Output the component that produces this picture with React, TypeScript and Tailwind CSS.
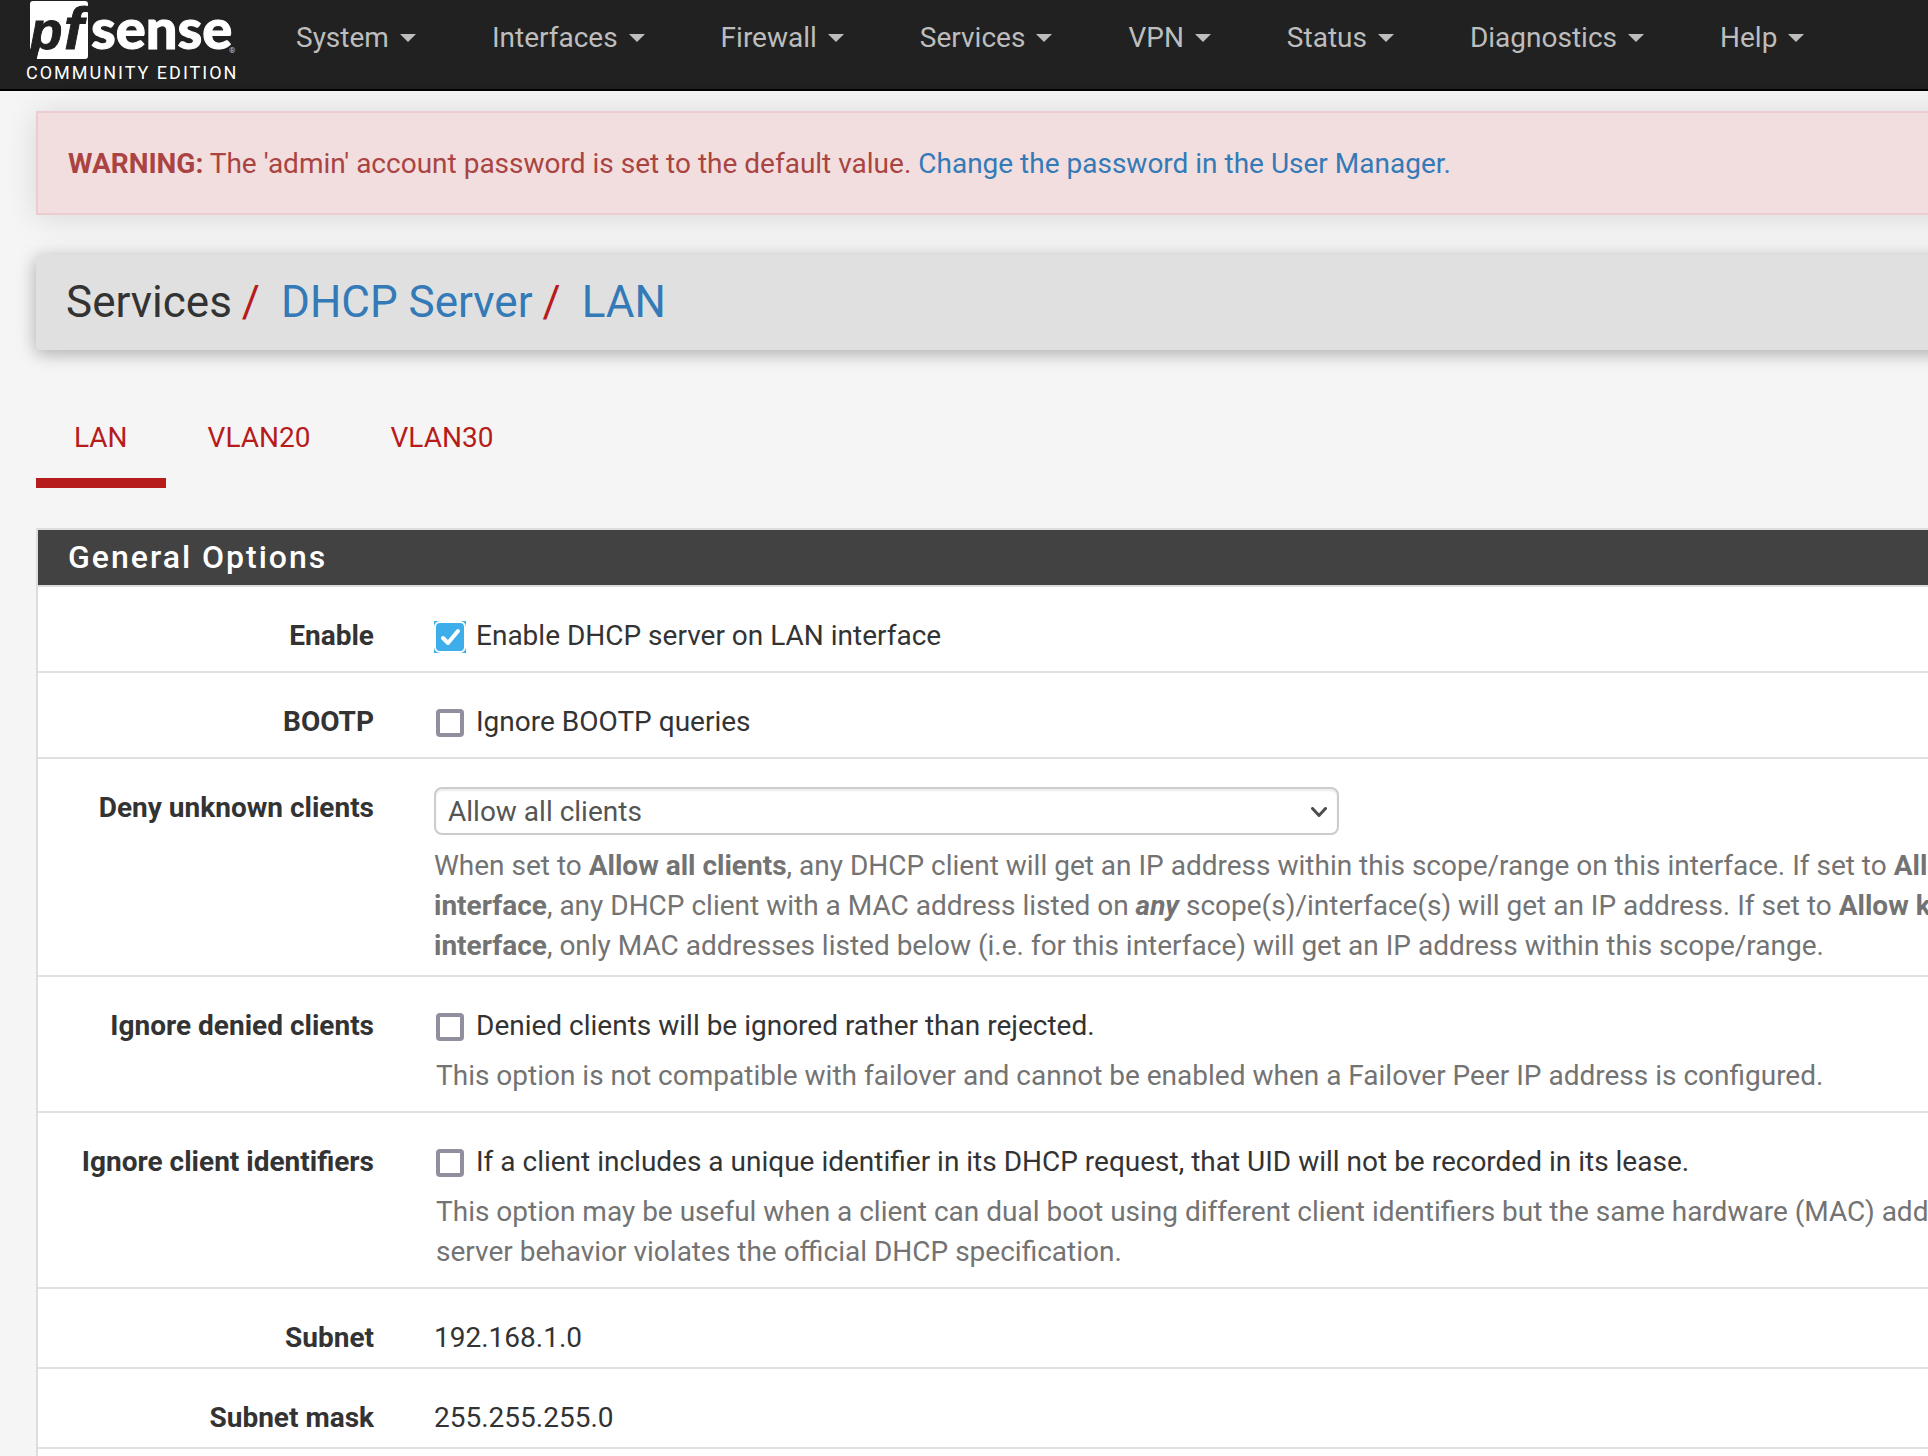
import type { ReactNode } from "react";

const menu = ["System", "Interfaces", "Firewall", "Services", "VPN", "Status", "Diagnostics", "Help"];

function Logo() {
  return (
    <a href="#home" aria-label="pfSense Community Edition" className="block w-[212px] shrink-0 text-white">
      <svg viewBox="0 0 212 60" className="block h-[60px] w-[212px] overflow-visible">
        <path d="M6 1H58Q61 1 61 4V56Q61 59 58 59H9L14 44L3 49V4Q3 1 6 1Z" fill="#fff" />
        <g fontFamily="Liberation Sans" fontWeight="700" fontStyle="italic" fill="#212121" stroke="#212121">
          <text x="3" y="49" fontSize="53">p</text>
          <text x="37" y="49" fontSize="59">f</text>
        </g>
        <text x="64" y="49" fontFamily="Lato" fontWeight="900" fontSize="56" fill="#fff" stroke="#fff">sense</text>
        <text x="202" y="53" fontFamily="Roboto" fontSize="8" fill="#ccc">®</text>
      </svg>
      <span className="-ml-px block text-[18px] leading-[26px] tracking-[2px] whitespace-nowrap">COMMUNITY EDITION</span>
    </a>
  );
}

function Navbar() {
  return (
    <header className="flex h-[91px] items-start border-b-2 border-black bg-[#212121] pl-[27px]">
      <Logo />
      <nav className="ml-[57px] flex gap-[76px] pt-[18px]">
        {menu.map((m) => (
          <button key={m} type="button" className="flex items-center gap-[11px] text-[28px] leading-10 text-[#bdbdbd]">
            {m}
            <svg viewBox="0 0 16 8" className="h-2 w-4 fill-current">
              <path d="M0 0H16L8 8Z" />
            </svg>
          </button>
        ))}
      </nav>
    </header>
  );
}

function Row({ label, htmlFor, children, tight }: { label: string; htmlFor?: string; children: ReactNode; tight?: boolean }) {
  return (
    <div className={`flex gap-[60px] border-b-2 border-[#e0e0e0] pt-[29px] ${tight ? "pb-[9px]" : "pb-[15px]"}`}>
      {htmlFor ? (
        <label htmlFor={htmlFor} className="w-[336px] shrink-0 text-right font-bold">
          {label}
        </label>
      ) : (
        <span className="w-[336px] shrink-0 text-right font-bold">{label}</span>
      )}
      <div className="min-w-0 flex-1">{children}</div>
    </div>
  );
}

function Check({ id, text, checked }: { id: string; text: string; checked?: boolean }) {
  return (
    <label className="flex w-fit items-center whitespace-nowrap">
      <span className="relative mt-0.5 mr-[10px] flex h-8 w-8 shrink-0 items-center justify-center">
        <input
          id={id}
          type="checkbox"
          defaultChecked={checked}
          className="peer h-7 w-7 appearance-none rounded-[4px] border-4 border-[#8f8f9d] bg-white checked:h-8 checked:w-8 checked:rounded-none checked:border-0 checked:bg-[#3daee9]"
        />
        <svg viewBox="0 0 32 32" fill="none" stroke="#fff" className="pointer-events-none absolute inset-0 hidden h-8 w-8 peer-checked:block">
          <rect x="1" y="1" width="30" height="30" rx="5" strokeWidth="2" />
          <path d="M9 17L14 22L24 10" strokeWidth="4" strokeLinecap="round" strokeLinejoin="round" />
        </svg>
      </span>
      {text}
    </label>
  );
}

function Help({ children }: { children: ReactNode }) {
  return <p className="mt-[10px] whitespace-nowrap text-[#737373]">{children}</p>;
}

export default function App() {
  return (
    <div className="h-screen overflow-hidden bg-[#f5f5f5] font-['Roboto',sans-serif] text-[28px] leading-10 text-[#333]">
      <Navbar />
      <main className="-mr-9 pt-5 pl-9">
        <div role="alert" className="border-2 border-[#ebccd1] bg-[#f2dede] px-[30px] pt-[31px] pb-[29px] text-[#a94442] shadow-[0_2px_30px_rgba(0,0,0,0.12)]">
          <strong className="font-bold">WARNING:</strong> The 'admin' account password is set to the default value.{" "}
          <a href="#users" className="text-[#337ab7]">Change the password in the User Manager.</a>
        </div>

        <nav className="mt-10 flex h-[95px] items-center rounded-[4px] bg-[#e0e0e0] pb-0.5 pl-[30px] text-[44px] shadow-[0_4px_16px_rgba(0,0,0,0.2),0_2px_24px_rgba(0,0,0,0.12)]">
          <span>Services</span>
          <span className="mx-[10px] text-[#b71c1c]">/</span>
          <a href="#dhcp" className="ml-[11px] text-[#337ab7]">DHCP Server</a>
          <span className="mx-[10px] text-[#b71c1c]">/</span>
          <a href="#lan" className="ml-[11px] text-[#337ab7]">LAN</a>
        </nav>

        <nav className="mt-[50px] flex gap-1 text-[#b71c1c]">
          <a href="#lan" aria-current="page" className="border-b-[10px] border-[#b71c1c] px-[38px] pt-[18px] pb-5">LAN</a>
          <a href="#vlan20" className="px-[38px] pt-[18px]">VLAN20</a>
          <a href="#vlan30" className="px-[38px] pt-[18px]">VLAN30</a>
        </nav>

        <section className="mt-10 border-2 border-[#ddd] bg-white pb-8">
          <h2 className="border-b-2 border-[#ddd] bg-[#424242] px-[30px] py-2 text-[32px] leading-[39px] font-medium tracking-[2px] text-white">General Options</h2>
          <Row label="Enable" htmlFor="enable">
            <Check id="enable" text="Enable DHCP server on LAN interface" checked />
          </Row>
          <Row label="BOOTP" htmlFor="bootp">
            <Check id="bootp" text="Ignore BOOTP queries" />
          </Row>
          <Row label="Deny unknown clients" htmlFor="deny" tight>
            <div className="relative -mt-px w-[905px]">
              <select id="deny" className="block h-12 w-full appearance-none rounded-lg border-2 border-[#ccc] bg-white pt-0.5 pl-3 text-[#555] shadow-[inset_0_2px_2px_rgba(0,0,0,0.075)]">
                <option>Allow all clients</option>
                <option>Allow known clients from any interface</option>
                <option>Allow known clients from only this interface</option>
              </select>
              <svg viewBox="0 0 16 10" fill="none" stroke="#4d4d4d" strokeWidth="3" strokeLinecap="round" strokeLinejoin="round" className="pointer-events-none absolute top-5 right-3 h-[10px] w-4">
                <path d="M1.5 1.5L8 8.5L14.5 1.5" />
              </svg>
            </div>
            <div className="pt-px">
              <Help>
                When set to <b>Allow all clients</b>, any DHCP client will get an IP address within this scope/range on this interface. If set to <b>Allow known clients from any</b>
                <br />
                <b>interface</b>, any DHCP client with a MAC address listed on <b><i>any</i></b> scope(s)/interface(s) will get an IP address. If set to <b>Allow known clients from only this</b>
                <br />
                <b>interface</b>, only MAC addresses listed below (i.e. for this interface) will get an IP address within this scope/range.
              </Help>
            </div>
          </Row>
          <Row label="Ignore denied clients" htmlFor="denied">
            <Check id="denied" text="Denied clients will be ignored rather than rejected." />
            <div className="pl-0.5">
              <Help>This option is not compatible with failover and cannot be enabled when a Failover Peer IP address is configured.</Help>
            </div>
          </Row>
          <Row label="Ignore client identifiers" htmlFor="uid">
            <Check id="uid" text="If a client includes a unique identifier in its DHCP request, that UID will not be recorded in its lease." />
            <div className="pl-0.5">
              <Help>
                This option may be useful when a client can dual boot using different client identifiers but the same hardware (MAC) address. Note that the resulting
                <br />
                server behavior violates the official DHCP specification.
              </Help>
            </div>
          </Row>
          <Row label="Subnet" tight>192.168.1.0</Row>
          <Row label="Subnet mask" tight>255.255.255.0</Row>
        </section>
      </main>
    </div>
  );
}
